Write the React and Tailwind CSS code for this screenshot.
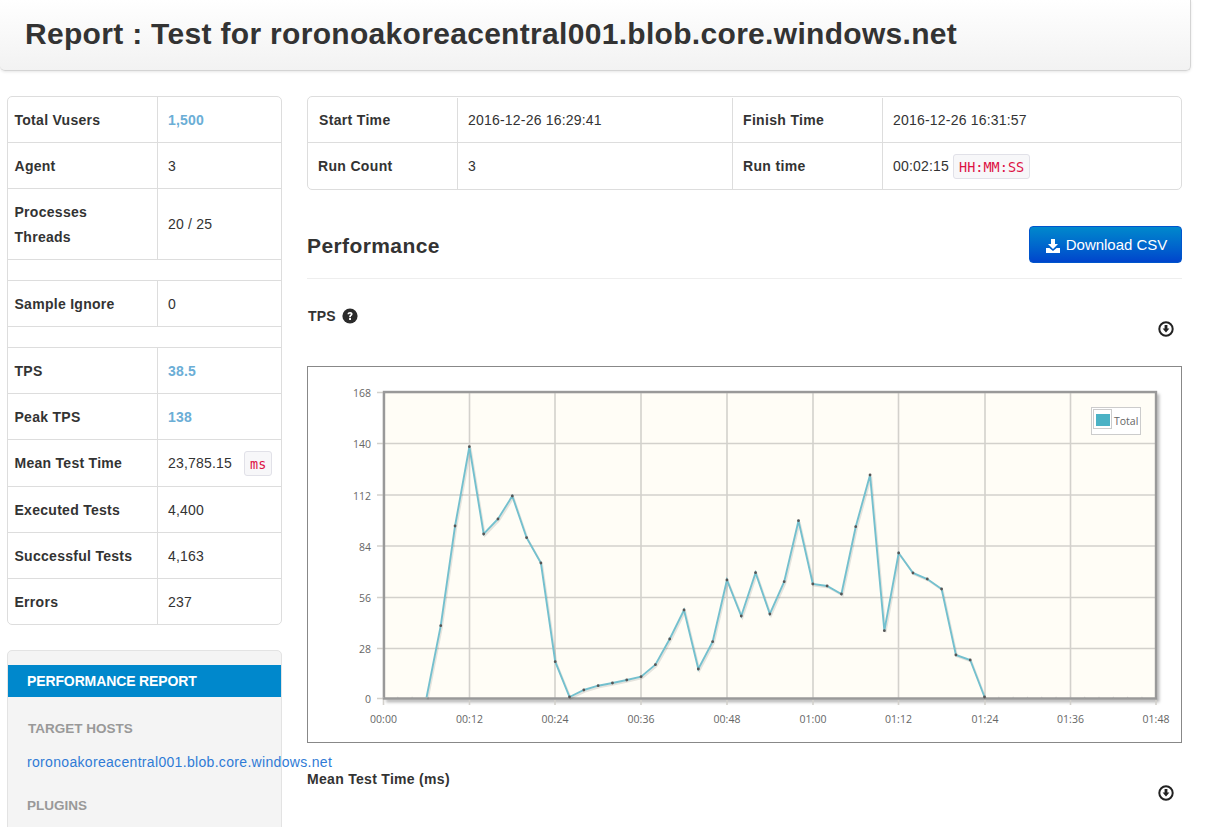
import React from "react";

const SANS = "[font-family:'Liberation_Sans',Arial,sans-serif]";

const statRows = [
  { h: "h-[45px]", label: "Total Vusers", value: "1,500", accent: true },
  { h: "h-[46px]", label: "Agent", value: "3" },
  { h: "h-[71px]", label: ["Processes", "Threads"], value: "20 / 25" },
  { h: "h-[21px]", empty: true },
  { h: "h-[46px]", label: "Sample Ignore", value: "0" },
  { h: "h-[21px]", empty: true },
  { h: "h-[46px]", label: "TPS", value: "38.5", accent: true },
  { h: "h-[46px]", label: "Peak TPS", value: "138", accent: true },
  { h: "h-[47px]", label: "Mean Test Time", value: "23,785.15", unit: "ms" },
  { h: "h-[46px]", label: "Executed Tests", value: "4,400" },
  { h: "h-[46px]", label: "Successful Tests", value: "4,163" },
  { h: "h-[46px]", label: "Errors", value: "237" },
];

// pixel y of each sample, one every 2 time units starting at 00:00
const samples = [
  698, 698, 698, 698, 625.7, 526, 446.7, 534, 519, 496, 537.7, 563, 661.7, 697,
  690, 685.7, 683, 680, 676.7, 664.7, 639, 610, 669, 641.7, 580, 616, 572.7,
  614, 581.7, 520.7, 584, 586, 594, 526.7, 475, 630.7, 553, 573, 579, 589, 655,
  660, 697, 698, 698, 698, 698, 698, 698, 698, 698, 698, 698, 698,
];

const points = samples.map((y, i) => [383.5 + i * 14.31, y]);
// the stretches at zero sit under the axis, so only the active part is stroked
const active = points.slice(3, 43);
const polyline = active.map((p) => p.join(",")).join(" ");
const shadowLine = active.map((p) => `${p[0] + 1.2},${p[1] + 1.5}`).join(" ");

const xTicks = [
  ["00:00", 383.5],
  ["00:12", 469.5],
  ["00:24", 555],
  ["00:36", 641],
  ["00:48", 727],
  ["01:00", 813],
  ["01:12", 898.5],
  ["01:24", 985],
  ["01:36", 1070.5],
  ["01:48", 1156],
];

const yTicks = [
  ["168", 392.5],
  ["140", 443.5],
  ["112", 495],
  ["84", 546],
  ["56", 597.5],
  ["28", 648.5],
  ["0", 698.5],
];

function Code({ children, className = "" }) {
  return (
    <code
      className={`inline-block h-[25px] rounded-[3px] border border-[#e1e1e8] bg-[#f7f7f9] px-[5px] text-[13.5px] leading-[24px] tracking-normal text-[#dd1144] [font-family:'DejaVu_Sans_Mono',monospace] ${className}`}
    >
      {children}
    </code>
  );
}

function CircleDownload() {
  return (
    <svg width="16" height="16" viewBox="0 0 16 16" className="shrink-0">
      <circle cx="8" cy="8" r="6.7" fill="none" stroke="#222" strokeWidth="2" />
      <path d="M6.6 4h2.8v3.6h2L8 11.6 4.6 7.6h2z" fill="#222" />
    </svg>
  );
}

function QuestionSign() {
  return (
    <svg width="16" height="16" viewBox="0 0 16 16" className="mt-[2px] shrink-0">
      <circle cx="8" cy="8" r="7.6" fill="#2b2b2b" />
      <path
        d="M5.5 6.3c0-1.5 1.1-2.3 2.6-2.3s2.5.8 2.5 2c0 1.7-2 1.7-1.7 3.2H7.2C6.8 7.2 8.7 7 8.7 6.2c0-.4-.3-.7-.7-.7-.5 0-.8.3-.8.8zM7.1 10h1.9v1.9H7.1z"
        fill="#fff"
      />
    </svg>
  );
}

function DownloadAlt() {
  return (
    <svg width="14" height="14" viewBox="0 0 14 14" className="shrink-0">
      <path d="M5 0h4v5h3L7 10 2 5h3z" fill="#fff" />
      <path d="M0 9h3.4L7 12l3.6-3H14v5H0z" fill="#fff" />
    </svg>
  );
}

function TpsChart() {
  return (
    <svg viewBox="308 367 873 375" className="block h-[375px] w-[873px]">
      <defs>
        <filter id="plotShadow" x="-2%" y="-2%" width="104%" height="104%">
          <feGaussianBlur stdDeviation="1.5" />
        </filter>
      </defs>

      {/* plot shadow */}
      <path
        d="M1157.5 394V700.5H386"
        fill="none"
        stroke="#000"
        strokeOpacity="0.3"
        strokeWidth="3.5"
        filter="url(#plotShadow)"
      />
      <rect x="383" y="392" width="774" height="307" fill="#fffdf6" />

      {/* grid and ticks */}
      {yTicks.map(([label, y]) => (
        <g key={label}>
          <line x1="377" x2="1156" y1={y} y2={y} stroke="#d3d1cc" strokeWidth="1.6" />
          <text
            x="371"
            y={y + 4.5}
            textAnchor="end"
            fontSize="10.5"
            fill="#666"
            fontFamily="'Open Sans', sans-serif"
          >
            {label}
          </text>
        </g>
      ))}
      {xTicks.map(([label, x]) => (
        <g key={label}>
          <line x1={x} x2={x} y1="392" y2="705" stroke="#d3d1cc" strokeWidth="1.6" />
          <text
            x={x}
            y="723"
            textAnchor="middle"
            fontSize="10.5"
            fill="#666"
            fontFamily="'Open Sans', sans-serif"
          >
            {label}
          </text>
        </g>
      ))}

      {/* plot border */}
      <rect
        x="384"
        y="392"
        width="772"
        height="306.5"
        fill="none"
        stroke="#999"
        strokeWidth="2.4"
      />

      {/* series */}
      <polyline
        points={shadowLine}
        fill="none"
        stroke="#000"
        strokeOpacity="0.1"
        strokeWidth="2"
      />
      <polyline points={polyline} fill="none" stroke="#74c0ce" strokeWidth="1.9" />
      {points.map(([x, y], i) =>
        y >= 698 ? (
          <circle key={i} cx={x} cy={y - 0.5} r="0.7" fill="#aaa" />
        ) : (
          <circle key={i} cx={x} cy={y} r="1.4" fill="#555" />
        )
      )}

      {/* legend */}
      <rect x="1091.5" y="407.5" width="49" height="27" fill="#fff" stroke="#ccc" />
      <rect x="1093.5" y="409.5" width="18" height="19" fill="#fff" stroke="#ccc" />
      <rect x="1096" y="414" width="14" height="12" fill="#4bb2c5" />
      <text
        x="1114"
        y="425"
        fontSize="10.5"
        fill="#666"
        fontFamily="'Open Sans', sans-serif"
      >
        Total
      </text>
    </svg>
  );
}

export default function App() {
  return (
    <div className={`h-screen w-[1216px] overflow-hidden bg-white text-[14px] text-[#333] ${SANS}`}>
      <header className="flex h-[71px] w-[1191px] items-center rounded-b-[5px] border-r border-b border-[#d4d4d4] bg-gradient-to-b from-white to-[#f2f2f2] pb-[3px] pl-[25px] shadow-[0_1px_3px_rgba(0,0,0,0.1)]">
        <h1 className="text-[30px] leading-[36px] font-bold tracking-[0.31px]">
          Report : Test for roronoakoreacentral001.blob.core.windows.net
        </h1>
      </header>

      <div className="flex gap-[25px] pt-[25px] pl-[7px]">
        <aside className="w-[275px] shrink-0">
          <div className="rounded-[5px] border border-[#ddd]">
            {statRows.map((row, i) => (
              <div
                key={i}
                className={`flex box-border ${row.h} ${i > 0 ? "border-t border-[#ddd]" : ""}`}
              >
                {!row.empty && (
                  <>
                    <div className="flex w-[150px] shrink-0 flex-col justify-center border-r border-[#ddd] pt-[1px] pl-[6.5px] leading-[25px] font-bold tracking-[0.28px]">
                      {[].concat(row.label).map((line) => (
                        <span key={line}>{line}</span>
                      ))}
                    </div>
                    <div className="flex flex-1 items-center pt-[1px] pl-[10px] tracking-[0.2px]">
                      <span className={row.accent ? "font-bold text-[#6baed6]" : ""}>
                        {row.value}
                      </span>
                      {row.unit && <Code className="ml-[12px]">{row.unit}</Code>}
                    </div>
                  </>
                )}
              </div>
            ))}
          </div>

          <nav className="mt-[25px] h-[300px] rounded-[5px] border border-[#e3e3e3] bg-[#f4f4f4] pt-[14px]">
            <div className="flex h-[32px] items-center bg-[#0088cc] pl-[19px] font-bold tracking-[-0.12px] text-white">
              PERFORMANCE REPORT
            </div>
            <h3 className="mt-[24px] pl-[20px] text-[13.5px] leading-[16px] font-bold text-[#999]">
              TARGET HOSTS
            </h3>
            <a className="mt-[15px] block pl-[19px] leading-[20px] tracking-[0.32px] whitespace-nowrap text-[#2f7bd6]">
              roronoakoreacentral001.blob.core.windows.net
            </a>
            <h3 className="mt-[26px] pl-[19px] text-[13.5px] leading-[16px] font-bold text-[#999]">
              PLUGINS
            </h3>
          </nav>
        </aside>

        <main className="w-[875px] shrink-0">
          <div className="rounded-[5px] border border-[#ddd]">
            <div className="flex h-[46px] border-b border-[#ddd] pt-[1px]">
              <div className="flex w-[150px] items-center border-r border-[#ddd] pl-[11px] font-bold tracking-[0.33px]">
                Start Time
              </div>
              <div className="flex w-[275px] items-center border-r border-[#ddd] pl-[10px] tracking-[0.2px]">
                2016-12-26 16:29:41
              </div>
              <div className="flex w-[150px] items-center border-r border-[#ddd] pl-[10px] font-bold tracking-[0.33px]">
                Finish Time
              </div>
              <div className="flex flex-1 items-center pl-[10px] tracking-[0.2px]">
                2016-12-26 16:31:57
              </div>
            </div>
            <div className="flex h-[46px]">
              <div className="flex w-[150px] items-center border-r border-[#ddd] pl-[10px] font-bold tracking-[0.33px]">
                Run Count
              </div>
              <div className="flex w-[275px] items-center border-r border-[#ddd] pl-[10px]">3</div>
              <div className="flex w-[150px] items-center border-r border-[#ddd] pl-[10px] font-bold tracking-[0.33px]">
                Run time
              </div>
              <div className="flex flex-1 items-center pl-[10px] tracking-[0.2px]">
                00:02:15
                <Code className="ml-[4px]">HH:MM:SS</Code>
              </div>
            </div>
          </div>

          <div className="mt-[36px] flex h-[53px] items-start justify-between border-b border-[#eee]">
            <h2 className="mt-[6px] text-[21px] leading-[28px] font-bold tracking-[0.4px]">
              Performance
            </h2>
            <button className="flex h-[37px] w-[153px] items-center justify-center gap-[6px] rounded-[4px] border border-[#0055cc] bg-gradient-to-b from-[#0088cc] to-[#0044cc] pt-[2px] pl-[2px] text-[15px] tracking-[-0.03px] text-white">
              <DownloadAlt />
              Download CSV
            </button>
          </div>

          <div className="mt-[27px] flex h-[60px] items-start justify-between">
            <div className="ml-[1px] flex items-start gap-[6px] leading-[20px] font-bold tracking-[0.2px]">
              TPS
              <QuestionSign />
            </div>
            <div className="mt-[15px] mr-[8px]">
              <CircleDownload />
            </div>
          </div>

          <div className="h-[377px] border border-[#888]">
            <TpsChart />
          </div>

          <div className="mt-[26px] flex items-start justify-between">
            <div className="leading-[20px] font-bold tracking-[0.3px]">Mean Test Time (ms)</div>
            <div className="mt-[16px] mr-[8px]">
              <CircleDownload />
            </div>
          </div>
        </main>
      </div>
    </div>
  );
}
